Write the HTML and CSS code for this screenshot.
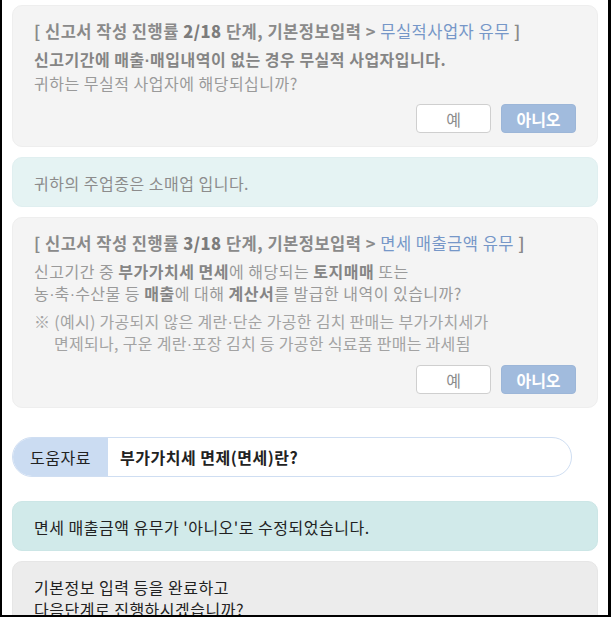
FILE: index.html
```html
<html>
<head>
<title>신고서 작성</title>
<meta http-equiv="Content-Type" content="text/html; charset=UTF-8">
<link rel="stylesheet" href="styles.css">
</head>
<body>
<div class="frame">

 <div class="card">
  <div class="step-title">[ 신고서 작성 진행률 <b>2/18</b> 단계, 기본정보입력 &gt; <span class="step-name">무실적사업자 유무</span> ]</div>
  <div class="question">
   <b>신고기간에 매출<span class="mid">·</span>매입내역이 없는 경우 무실적 사업자입니다.</b><br>
   귀하는 무실적 사업자에 해당되십니까?
  </div>
  <div class="answer-row">
   <button class="btn btn-yes">예</button>
   <button class="btn btn-no">아니오</button>
  </div>
 </div>

 <div class="card card-info">귀하의 주업종은 소매업 입니다.</div>

 <div class="card">
  <div class="step-title">[ 신고서 작성 진행률 <b>3/18</b> 단계, 기본정보입력 &gt; <span class="step-name">면세 매출금액 유무</span> ]</div>
  <div class="question">
   신고기간 중 <b>부가가치세 면세</b>에 해당되는 <b>토지매매</b> 또는<br>
   농<span class="mid">·</span>축<span class="mid">·</span>수산물 등 <b>매출</b>에 대해 <b>계산서</b>를 발급한 내역이 있습니까?
  </div>
  <div class="note">※ (예시) 가공되지 않은 계란<span class="mid">·</span>단순 가공한 김치 판매는 부가가치세가<br>면제되나, 구운 계란<span class="mid">·</span>포장 김치 등 가공한 식료품 판매는 과세됨</div>
  <div class="answer-row">
   <button class="btn btn-yes">예</button>
   <button class="btn btn-no">아니오</button>
  </div>
 </div>

 <div class="help-pill">
  <div class="help-label">도움자료</div>
  <div class="help-text">부가가치세 면제(면세)란?</div>
 </div>

 <div class="card card-done">면세 매출금액 유무가 '아니오'로 수정되었습니다.</div>

 <div class="card card-next">
  기본정보 입력 등을 완료하고<br>
  다음단계로 진행하시겠습니까?
 </div>

</div>
</body>
</html>
```

FILE: styles.css
```css
html, body {
 margin: 0;
 padding: 0;
 background: #ffffff;
}
body {
 font-family: "Noto Sans CJK KR", "Noto Sans", sans-serif;
 font-size: 16px;
 letter-spacing: 0.5px;
 color: #222222;
}
.frame {
 height: 617px;
 box-sizing: border-box;
 overflow: hidden;
 border-style: solid;
 border-color: #000000;
 border-width: 0 3px 2px 2px;
 padding: 5px 10px 0 10px;
}
.card {
 background-color: #f4f4f4;
 border: 1px solid #eeeeee;
 border-radius: 10px;
 padding: 14px 21px 13px 21px;
 margin-bottom: 10px;
 line-height: 22px;
}
.mid {
 font-family: "Liberation Sans", sans-serif;
 letter-spacing: 0;
}
.step-title {
 font-size: 16.5px;
 font-weight: bold;
 color: #8a8a8a;
 margin-bottom: 6px;
 white-space: nowrap;
}
.step-title b {
 color: #7c7c7c;
}
.step-name {
 font-weight: normal;
 color: #7697c8;
}
.question {
 color: #9a9a9a;
}
.question b {
 color: #858585;
}
.note {
 margin-top: 5px;
 margin-bottom: 2px;
 padding-left: 20px;
 text-indent: -20px;
 color: #a3a3a3;
 line-height: 21px;
 letter-spacing: 0.3px;
}
.answer-row {
 display: flex;
 justify-content: flex-end;
 gap: 10px;
 margin-top: 10px;
}
.btn {
 width: 75px;
 height: 29px;
 border-radius: 4px;
 font-family: "Noto Sans CJK KR", "Noto Sans", sans-serif;
 font-size: 16px;
 padding: 0;
}
.btn-yes {
 background-color: #ffffff;
 border: 1px solid #cfcfcf;
 color: #8c8c8c;
}
.btn-no {
 background-color: #a1bbdd;
 border: 1px solid #9cb6d8;
 color: #ffffff;
 font-weight: bold;
}
.card-info {
 background-color: #e5f3f3;
 border-color: #e0eff0;
 color: #8c8c8c;
 padding-bottom: 12px;
}
.card-done {
 background-color: #d1eaea;
 border-color: #cce6e6;
 color: #222222;
 padding-bottom: 12px;
}
.card-next {
 background-color: #ececec;
 border-color: #e6e6e6;
 color: #222222;
}
.help-pill {
 display: flex;
 align-items: stretch;
 height: 38px;
 width: 558px;
 border: 1px solid #cfdef2;
 border-radius: 21px;
 overflow: hidden;
 margin-top: 29px;
 margin-bottom: 24px;
 background-color: #ffffff;
}
.help-label {
 width: 95px;
 background-color: #cbdcf2;
 display: flex;
 align-items: center;
 justify-content: center;
 color: #222222;
}
.help-text {
 display: flex;
 align-items: center;
 padding-left: 12px;
 font-weight: bold;
 color: #222222;
}
```
